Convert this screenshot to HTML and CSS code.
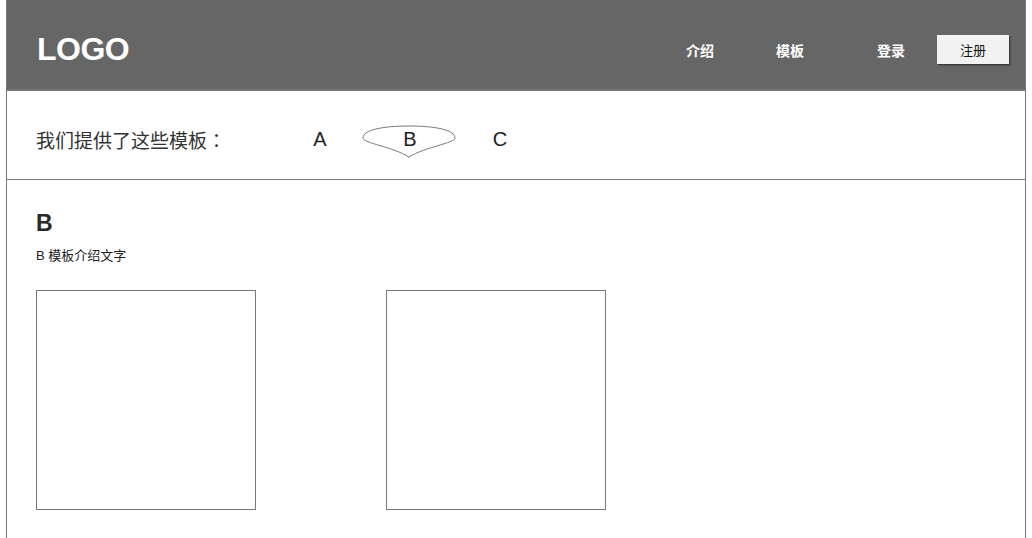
FILE: index.html
```html
<!DOCTYPE html>
<html lang="zh-CN">
<head>
    <meta charset="UTF-8">
    <meta name="viewport" content="width=device-width, initial-scale=1.0">
    <title>模板</title>
    <link rel="stylesheet" href="styles.css">
</head>
<body>
    <div class="page">
        <header class="header">
            <div class="logo">LOGO</div>
            <nav class="nav">
                <a href="#" class="nav-link">介绍</a>
                <a href="#" class="nav-link">模板</a>
                <a href="#" class="nav-link login">登录</a>
                <a href="#" class="btn-register">注册</a>
            </nav>
        </header>

        <div class="tabs-bar">
            <div class="tabs-title">我们提供了这些模板<span class="colon" lang="zh-TW">：</span></div>
            <div class="tabs">
                <div class="tab">A</div>
                <div class="tab active">
                    <svg class="tab-shape" width="96" height="36" viewBox="0 0 96 36">
                        <path d="M48,2 C75,2 94,6 94,14 C94,19 64,23 48,33 C32,23 2,19 2,14 C2,6 21,2 48,2 Z" fill="none" stroke="#7a7a7a" stroke-width="1"/>
                    </svg>
                    <span class="tab-label">B</span>
                </div>
                <div class="tab">C</div>
            </div>
        </div>

        <section class="content">
            <h2 class="content-title">B</h2>
            <p class="content-desc">B 模板介绍文字</p>
            <div class="previews">
                <div class="preview"></div>
                <div class="preview"></div>
            </div>
        </section>
    </div>
</body>
</html>
```

FILE: styles.css
```css
body {
    margin: 0;
    font-family: "Liberation Sans", Arial, "Noto Sans CJK SC", sans-serif;
    color: #333;
    background: #fff;
}

.page {
    margin-left: 6px;
    width: 1018px;
    min-height: 538px;
    border-left: 1px solid #777;
    border-right: 1px solid #777;
}

/* nagłówek */
.header {
    display: flex;
    align-items: center;
    box-sizing: border-box;
    height: 91px;
    padding: 12px 16px 2px 30px;
    background-color: #666;
    border-bottom: 2px solid #777;
}

.logo {
    font-size: 32px;
    font-weight: bold;
    color: #fff;
    letter-spacing: -0.5px;
}

.nav {
    display: flex;
    align-items: center;
    margin-left: auto;
}

.nav-link {
    margin-right: 62px;
    font-family: "Noto Sans CJK SC", sans-serif;
    font-size: 14px;
    font-weight: bold;
    color: #fff;
    text-decoration: none;
}

.nav-link.login {
    margin-left: 11px;
    margin-right: 32px;
}

.btn-register {
    display: flex;
    align-items: center;
    justify-content: center;
    width: 72px;
    height: 29px;
    background-color: #f2f2f2;
    box-shadow: 1px 1px 0 #3c3c3c, 2px 2px 1px #555;
    font-family: "Noto Sans CJK SC", sans-serif;
    font-size: 13px;
    color: #111;
    text-decoration: none;
}

/* lista szablonów */
.tabs-bar {
    display: flex;
    align-items: center;
    box-sizing: border-box;
    height: 89px;
    padding: 8px 0 0 29px;
    border-bottom: 1px solid #777;
}

.tabs-title {
    width: 239px;
    font-family: "Noto Sans CJK SC", sans-serif;
    font-size: 19px;
    color: #333;
}

.tabs-title .colon {
    font-family: "Noto Sans CJK TC", sans-serif;
}

.tabs {
    display: flex;
}

.tab {
    position: relative;
    width: 90px;
    text-align: center;
    font-size: 20px;
    line-height: 24px;
    color: #222;
}

.tab-shape {
    position: absolute;
    left: -4px;
    top: -3px;
}

.tab-label {
    position: relative;
}

/* treść */
.content {
    padding: 30px 0 0 29px;
}

.content-title {
    margin: 0;
    font-size: 23px;
    line-height: 26px;
    font-weight: bold;
    color: #2a2a2a;
}

.content-desc {
    margin: 12px 0 0;
    font-family: "Liberation Sans", "Noto Sans CJK SC", sans-serif;
    font-size: 13px;
    line-height: 16px;
    color: #222;
}

.previews {
    display: flex;
    gap: 130px;
    margin-top: 26px;
}

.preview {
    box-sizing: border-box;
    width: 220px;
    height: 220px;
    border: 1px solid #777;
}
```
